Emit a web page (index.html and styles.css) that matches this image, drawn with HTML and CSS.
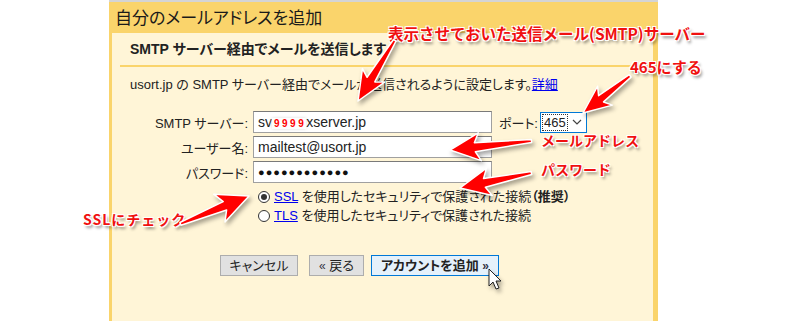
FILE: index.html
```html
<html lang="ja">
<head>
	<meta charset="UTF-8">
	<title>自分のメールアドレスを追加</title>
	<link rel="stylesheet" href="styles.css">
</head>
<body>
	<div class="page">
		<div class="dialog">
			<div class="dTitle">自分のメールアドレスを追加</div>
			<div class="dBody">
				<div class="dSub">SMTP サーバー経由でメールを送信します</div>
				<p class="desc">usort.jp の SMTP サーバー経由でメールが送信されるように設定します。<a class="lnk">詳細</a></p>

				<div class="form">
					<div class="row">
						<span class="lbl">SMTP サーバー:</span>
						<div class="field">sv<span class="mask">9999</span>xserver.jp</div>
						<span class="portLbl">ポート:</span>
						<div class="select"><span class="selVal">465</span>
							<svg class="chev" width="10" height="6" viewBox="0 0 10 6"><path d="M1 1 L5 5 L9 1" fill="none" stroke="#444" stroke-width="1.2"/></svg>
						</div>
					</div>
					<div class="row">
						<span class="lbl">ユーザー名:</span>
						<div class="field">mailtest@usort.jp</div>
					</div>
					<div class="row">
						<span class="lbl">パスワード:</span>
						<div class="field pass">●●●●●●●●●●●●</div>
					</div>
				</div>

				<div class="radios">
					<div class="radio"><span class="rdo on"></span><span class="rTxt"><a class="lnk">SSL</a> を使用したセキュリティで保護された接続<b>（推奨）</b></span></div>
					<div class="radio"><span class="rdo"></span><span class="rTxt"><a class="lnk">TLS</a> を使用したセキュリティで保護された接続</span></div>
				</div>

				<div class="btns">
					<span class="btn cancel">キャンセル</span>
					<span class="btn back"><i class="q">«</i> 戻る</span>
					<span class="btn add">アカウントを追加 <i class="q">»</i></span>
				</div>
			</div>
		</div>

		<!-- 注釈 -->
		<div class="ann a1">表示させておいた送信メール(SMTP)サーバー</div>
		<div class="ann a2">465にする</div>
		<div class="ann a3">メールアドレス</div>
		<div class="ann a4">パスワード</div>
		<div class="ann a5">SSLにチェック</div>

		<svg class="arrows" width="788" height="321" viewBox="0 0 788 321">
			<g fill="#f00" stroke="#fff" stroke-width="1.5" stroke-linejoin="round">
				<polygon transform="translate(358,101) rotate(-58.8)" points="0,0 30,-13 25,-4.5 71,-1.5 71,1.5 25,4.5 30,13"/>
				<polygon transform="translate(583,113) rotate(-38.2)" points="0,0 28,-12 23,-4 60,-1.5 60,1.5 23,4 28,12"/>
				<polygon transform="translate(450,150) rotate(-6.3)" points="0,0 30,-14 25,-4.5 82,-1.5 82,1.5 25,4.5 30,14"/>
				<polygon transform="translate(460,188) rotate(-11.8)" points="0,0 30,-14 25,-4.5 73,-1.5 73,1.5 25,4.5 30,14"/>
				<polygon transform="translate(249,196) rotate(157.9)" points="0,0 32,-15 26,-4.5 74,-1.5 74,1.5 26,4.5 32,15"/>
			</g>
			<!-- マウスカーソル -->
			<path d="M489 269 L489 286 L493 282 L496 289 L499 288 L496 281 L501 281 Z" fill="#fff" stroke="#222" stroke-width="1" stroke-linejoin="round"/>
		</svg>
	</div>
</body>
</html>
```

FILE: styles.css
```css
*{
	margin: 0px;
	padding: 0px;
	box-sizing: border-box;
}

body{
	background: #fff;
	font-family: "Liberation Sans", "Noto Sans CJK JP", sans-serif;
	color: #222;
}

.page{
	position: relative;
	width: 788px;
	height: 321px;
	overflow: hidden;
}

.dialog{
	margin-left: 109px;
	width: 549px;
	height: 321px;
	border-top: 2px solid #d4d4d4;
	background: #fad46b;
	padding: 0px 5px 0px 3px;
	display: flex;
	flex-direction: column;
}

.dialog .dTitle{
	height: 31px;
	line-height: 33px;
	padding-left: 3px;
	font-size: 17px;
	font-feature-settings: "palt";
	color: #1a1a1a;
}

.dialog .dBody{
	flex: 1;
	background: #fff5d7;
	padding: 0px 0px 0px 18px;
	font-size: 13px;
	font-feature-settings: "palt";
}

.dBody .dSub{
	margin-left: -10px;
	margin-right: 3px;
	padding: 6px 10px;
	line-height: 20px;
	font-size: 14px;
	font-weight: bold;
	border-bottom: 2px solid #fad46b;
}

.dBody .desc{
	margin-top: 9px;
	line-height: 18px;
}

.lnk{
	color: #0000ee;
	text-decoration: underline;
}

.form{
	margin-top: 17px;
	display: flex;
	flex-direction: column;
	gap: 3px;
}

.form .row{
	display: flex;
	align-items: center;
	height: 22px;
}

.form .row .lbl{
	width: 118px;
	text-align: right;
	margin-right: 5px;
}

.form .row .field{
	width: 239px;
	height: 22px;
	line-height: 20px;
	padding-left: 4px;
	font-size: 14px;
	background: #fff;
	border: 1px solid #a0a0a0;
	border-top-color: #7a7a7a;
}

.form .row .field .mask{
	color: #f00;
	font-size: 10px;
	font-weight: bold;
	letter-spacing: 2.5px;
	padding-left: 2px;
	background: #fdfdfd;
	box-shadow: 0px 0px 3px #ddd;
}

.form .row .field.pass{
	font-size: 11px;
	letter-spacing: 1px;
	color: #111;
}

.form .row .portLbl{
	margin-left: 7px;
	margin-right: 2px;
}

.form .row .select{
	width: 47px;
	height: 21px;
	border: 1px solid #0078d7;
	background: #fff;
	display: flex;
	align-items: center;
	padding-left: 2px;
	gap: 5px;
	font-size: 13px;
}

.form .row .select .selVal{
	padding: 0px 1px;
	outline: 1px dotted #333;
	line-height: 15px;
}

.radios{
	margin-top: 4px;
	padding-left: 128px;
	line-height: 19px;
}

.radios .radio{
	display: flex;
	align-items: center;
	white-space: nowrap;
}

.radios .radio b{
	font-weight: bold;
}

.radios .rdo{
	width: 12px;
	height: 12px;
	border: 1px solid #333;
	border-radius: 50%;
	background: #fff;
	margin-right: 4px;
	position: relative;
}

.radios .rdo.on::after{
	content: "";
	position: absolute;
	left: 2px;
	top: 2px;
	width: 6px;
	height: 6px;
	border-radius: 50%;
	background: #333;
}

.btns{
	margin-top: 30px;
	padding-left: 90px;
	display: flex;
	height: 21px;
}

.btns .btn{
	height: 21px;
	line-height: 19px;
	text-align: center;
	background: #e1e1e1;
	border: 1px solid #adadad;
	font-size: 13px;
}

.btns .btn .q{
	font-style: normal;
	color: #334;
	font-size: 12px;
}

.btns .cancel{
	width: 78px;
	margin-right: 11px;
}

.btns .back{
	width: 55px;
	margin-right: 7px;
}

.btns .add{
	width: 128px;
	background: #e5f1fb;
	border-color: #0078d7;
	font-weight: bold;
}

.ann{
	position: absolute;
	line-height: 18px;
	font-family: "Noto Sans CJK JP", sans-serif;
	font-weight: bold;
	color: #f01010;
	white-space: nowrap;
	text-shadow: 1px 1px 0 #fff, -1px -1px 0 #fff, 1px -1px 0 #fff, -1px 1px 0 #fff, 2px 3px 3px rgba(0,0,0,0.45);
}

.a1{
	left: 388px;
	top: 24px;
	font-size: 15.5px;
}

.a2{
	left: 630px;
	top: 58px;
	font-size: 15px;
}

.a3{
	left: 541px;
	top: 131px;
	font-size: 14px;
}

.a4{
	left: 541px;
	top: 160px;
	font-size: 14px;
}

.a5{
	left: 83px;
	top: 210px;
	font-size: 14px;
	letter-spacing: 1px;
}

.arrows{
	position: absolute;
	left: 0px;
	top: 0px;
	pointer-events: none;
	filter: drop-shadow(2px 3px 2px rgba(0,0,0,0.35));
}
```
